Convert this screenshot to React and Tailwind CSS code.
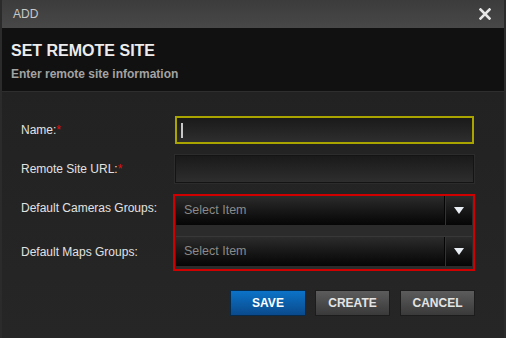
import React from "react";

function Select() {
  return (
    <div className="flex h-full w-full bg-gradient-to-b from-[#2c2c2c] to-[#060606]">
      <div className="flex-1 flex items-center pl-[8px] text-[12.5px] text-[#8a8a8a]">Select Item</div>
      <div className="w-[2px] h-full bg-[#050505] border-r border-[#333]" />
      <div className="w-[26px] flex items-center justify-center">
        <svg width="10" height="7" viewBox="0 0 10 7">
          <polygon points="0,0 10,0 5,7" fill="#e8eef4" />
        </svg>
      </div>
    </div>
  );
}

export default function App() {
  return (
    <div
      className="w-[506px] h-[338px] flex flex-col bg-[#232323] border-x-2 border-[#2b2b2b] overflow-hidden"
      style={{ fontFamily: '"Liberation Sans", Arial, sans-serif' }}
    >
      <div className="h-[28px] shrink-0 flex items-center justify-between pl-[11px] pr-[13px] bg-gradient-to-b from-[#3c3c3c] to-[#484848]">
        <span className="text-[12px] text-[#c8c8c8]">ADD</span>
        <svg width="12" height="12" viewBox="0 0 12 12">
          <path d="M1.5 1.5 L10.5 10.5 M10.5 1.5 L1.5 10.5" stroke="#e6e6e6" strokeWidth="2.6" strokeLinecap="square" />
        </svg>
      </div>
      <div className="h-[64px] shrink-0 bg-[#111111] pl-[9px] pt-[13px] border-b border-[#2e2e2e]">
        <div className="text-[16px] font-bold text-[#ececec] leading-[20px]">SET REMOTE SITE</div>
        <div className="text-[12px] font-bold text-[#a3a3a3] leading-[14px] mt-[6px]">Enter remote site information</div>
      </div>
      <div className="flex-1 flex flex-col pl-[19px] pr-[29px] pt-[24px] bg-gradient-to-b from-[#222222] to-[#262626]">
        <div className="flex">
          <div className="w-[154px] mt-[7px] text-[12px] leading-[14px] text-[#e2e2e2]">
            Name:<span className="text-[#e01010]">*</span>
          </div>
          <div className="w-[299px] h-[28px] border-2 border-[#aaa400] bg-gradient-to-b from-[#1a1a1a] to-[#2e2e2e] flex items-center pl-[4px]">
            <div className="w-[2px] h-[15px] bg-[#c8c8c8]" />
          </div>
        </div>
        <div className="flex mt-[11px]">
          <div className="w-[154px] mt-[7px] text-[12px] leading-[14px] text-[#e2e2e2]">
            Remote Site URL:<span className="text-[#e01010]">*</span>
          </div>
          <div className="w-[299px] h-[28px] border border-[#141414] outline outline-1 outline-[#2c2c2c] bg-gradient-to-b from-[#1a1a1a] to-[#2e2e2e]" />
        </div>
        <div className="flex mt-[11px]">
          <div className="w-[152px] text-[12px] leading-[14px] text-[#e2e2e2]">
            <div className="mt-[7px]">Default Cameras Groups:</div>
            <div className="mt-[30px]">Default Maps Groups:</div>
          </div>
          <div className="w-[302px] h-[77px] border-2 border-[#d00000] bg-[#2b2b2b] px-[1px] flex flex-col">
            <div className="h-[29px]"><Select /></div>
            <div className="h-[12px] border-b border-[#383838]" />
            <div className="h-[29px]"><Select /></div>
          </div>
        </div>
        <div className="flex justify-end gap-[9px] mt-[19px]">
          <button className="w-[76px] h-[26px] border border-[#062a4a] bg-gradient-to-b from-[#0b73c8] to-[#0a4a8c] text-white text-[12px] font-bold">SAVE</button>
          <button className="w-[75px] h-[26px] border border-[#1c1c1c] bg-gradient-to-b from-[#5c5c5c] to-[#3a3a3a] text-[#e4e4e4] text-[12px] font-bold">CREATE</button>
          <button className="w-[75px] h-[26px] ml-[1px] border border-[#1c1c1c] bg-gradient-to-b from-[#5c5c5c] to-[#3a3a3a] text-[#e4e4e4] text-[12px] font-bold">CANCEL</button>
        </div>
      </div>
    </div>
  );
}
